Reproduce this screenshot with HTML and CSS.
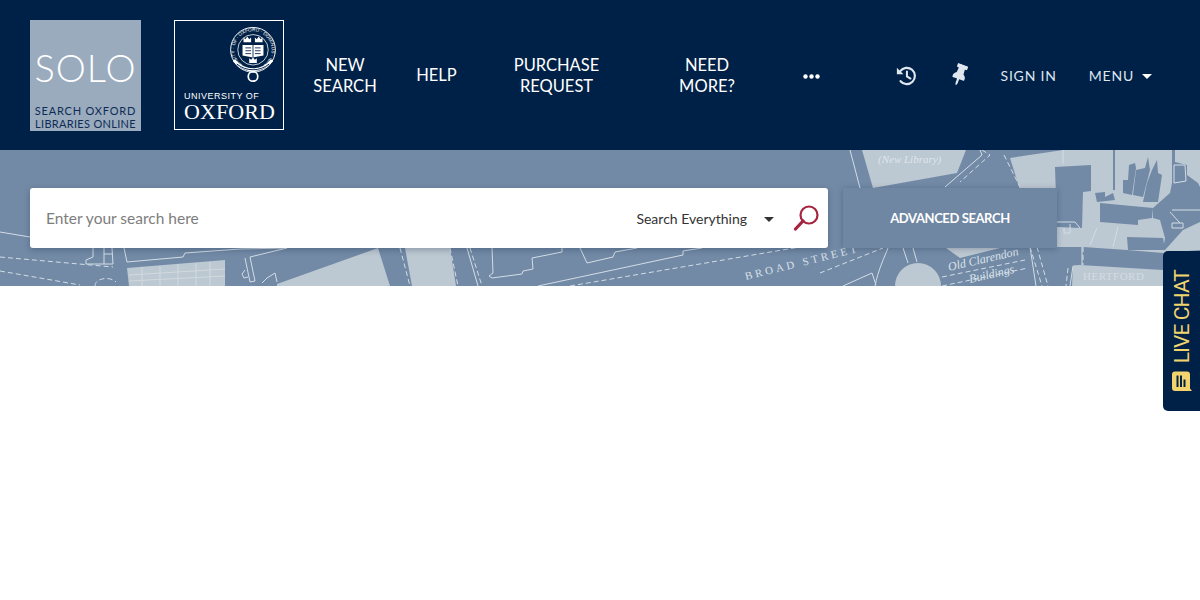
FILE: index.html
```html
<!DOCTYPE html>
<html lang="en">
<head>
  <meta charset="UTF-8" />
  <meta name="viewport" content="width=device-width, initial-scale=1.0" />
  <title>SOLO - Search Oxford Libraries Online</title>
  <link rel="stylesheet" href="styles.css">
</head>
<body>
  <header class="topbar">
    <a class="solo-logo" href="#">
      <span class="solo-name">SOLO</span>
      <span class="solo-sub"><span class="solo-sub-wide">SEARCH OXFORD</span><br>LIBRARIES ONLINE</span>
    </a>
    <a class="ox-logo" href="#">
      <svg class="ox-seal" viewBox="0 0 50 62">
        <defs><path id="sealRing" d="M25 44.500a19.500 19.500 0 1 1 .01 0"/></defs>
        <circle cx="25" cy="25" r="23.500" fill="none" stroke="#fff" stroke-width="1"/>
        <circle cx="25" cy="25" r="16" fill="none" stroke="#fff" stroke-width=".8"/>
        <text class="seal-text"><textPath href="#sealRing">UNIVERSITY · OF · OXFORD · DOMINUS · ILLU</textPath></text>
        <path d="M14 20h22v11l-11 2-11-2z" fill="#fff"/>
        <path d="M25 20v13M17 23h6M17 26h6M17 29h6M27 23h6M27 26h6M27 29h6" stroke="#002147" stroke-width=".9"/>
        <path d="M15 12l2 2 2-3 2 3 2-2v5h-8zM27 12l2 2 2-3 2 3 2-2v5h-8zM21 34l2 1.500 2-2.500 2 2.500 2-1.500v5h-8z" fill="#fff"/>
        <path d="M5 36c5 6 13 10 20 10s15-4 20-10" fill="none" stroke="#fff" stroke-width="3"/>
        <path d="M8 40c5 4 11 6 17 6s12-2 17-6" fill="none" stroke="#002147" stroke-width="1"/>
        <circle cx="25" cy="53" r="5" fill="none" stroke="#fff" stroke-width="1.800"/>
      </svg>
      <span class="ox-small">UNIVERSITY OF</span>
      <span class="ox-big">OXFORD</span>
    </a>
    <nav class="main-nav">
      <a href="#">NEW<br>SEARCH</a>
      <a href="#">HELP</a>
      <a href="#">PURCHASE<br>REQUEST</a>
      <a href="#">NEED<br>MORE?</a>
      <a class="nav-dots" href="#" aria-label="More">
        <svg viewBox="0 0 17 5" width="17" height="5"><circle cx="2.500" cy="2.500" r="2.200"/><circle cx="8.500" cy="2.500" r="2.200"/><circle cx="14.500" cy="2.500" r="2.200"/></svg>
      </a>
    </nav>
    <div class="user-nav">
      <a class="icon-history" href="#" aria-label="History">
        <svg viewBox="0 0 24 24" width="21" height="21"><path d="M4.800 7A9.300 9.300 0 1 1 5.200 18.500" fill="none" stroke="#dfe6ee" stroke-width="2.500" stroke-linecap="round"/><path d="M1 3V10.500H8.500Z" fill="#dfe6ee"/><path d="M12.500 7.500V13L16.500 15.500" fill="none" stroke="#dfe6ee" stroke-width="2.300" stroke-linecap="round"/></svg>
      </a>
      <a class="icon-pin" href="#" aria-label="Pinned">
        <svg viewBox="0 0 384 512" width="13" height="22" preserveAspectRatio="none"><path d="M298.028 214.267L285.793 96H328c13.255 0 24-10.745 24-24V24c0-13.255-10.745-24-24-24H56C42.745 0 32 10.745 32 24v48c0 13.255 10.745 24 24 24h42.207L85.972 214.267C37.465 236.82 0 277.261 0 328c0 13.255 10.745 24 24 24h136v104.007c0 1.242.289 2.467.845 3.578l24 48c2.941 5.882 11.364 5.893 14.311 0l24-48a8.008 8.008 0 0 0 .845-3.578V352h136c13.255 0 24-10.745 24-24-.001-51.183-37.983-91.420-85.973-113.733z"/></svg>
      </a>
      <a class="user-link link-signin" href="#">SIGN IN</a>
      <a class="user-link" href="#">MENU<span class="caret caret-light"></span></a>
    </div>
  </header>

  <section class="hero">
    <svg class="hero-map" viewBox="0 0 1200 136" width="1200" height="136">
      <g class="map-fill">
        <path d="M127 118 225 110V136H129Z"/>
        <path d="M277 134 378 98 390 136H277Z"/>
        <path d="M405 98H450L456 136H412Z"/>
        <path d="M862 0H966L957 23 873 38Z"/>
        <path d="M946 98H1000L960 108Z"/>
        <path d="M1010 8 1063 0H1200V100L1163 103 1127 100 1083 97 1057 97V60L1020 40Z"/>
        <path d="M1073 116Q1073 115 1080 115L1163 120V136H1072Z"/>
        <circle cx="918" cy="136" r="23"/>
      </g>
      <g class="map-dark">
        <path d="M1055 17 1091 15V41L1083 42 1082 78 1057 77Z"/>
        <path d="M1113 0H1115V40H1113Z"/>
        <path d="M1100 53 1153 58 1152 68 1138 70V75L1100 72Z"/>
        <path d="M1095 43 1105 42V47L1113 43 1115 50 1097 52Z"/>
        <path d="M1123 43V30H1128L1129 15 1135 13 1136 18 1132 45Z"/>
        <path d="M1133 45 1136 20 1145 18 1148 7 1150 20 1143 47Z"/>
        <path d="M1143 52 1147 33 1152 20 1157 10 1158 23 1162 25 1158 52Z"/>
        <path d="M1172 0H1175V12L1187 15V25L1198 33 1200 37V72L1183 80 1165 100H1163L1165 88 1160 70 1153 68V58L1170 43 1172 33Z"/>
        <path d="M1127 87 1163 88 1165 100 1128 100Z"/>
      </g>
      <g class="map-line">
        <path d="M0 82 30 87"/>
        <path d="M93 98V107L86 110V114H113L112 98M104 98V114M104 104H112"/>
        <path d="M124 98 127 112 183 107 185 103 240 99 287 98"/>
        <path d="M245 108 250 132 255 131 250 107 287 98M245 120 242 124 244 128 248 127M262 133 267 128 275 123 277 132"/>
        <path d="M467 98 478 136"/>
        <path d="M492 98 493 123 489 126 492 128 522 124 523 121 533 119 532 108 562 102V98"/>
        <path d="M580 98 587 113 613 107 615 102 637 98"/>
        <path d="M538 136 683 105V101L702 98"/>
        <path d="M850 0 860 38M945 37 982 5 980 0"/>
        <path d="M875 136C878 120 885 106 888 98M903 98 908 113M913 98 917 112"/>
        <path d="M843 136 872 123 876 135"/>
        <path d="M1030 97 1036 136M1082 97V115M1073 116 1070 136"/>
        <path d="M1063 0V14M1097 78 1090 95M1118 77 1113 97M1174 15H1185L1186 31 1174 33ZM1172 60H1200M1170 62 1180 73M1172 73H1183V78H1172Z"/>
        <path d="M1057 72H1075L1080 78M1064 78 1064 83H1070V74"/>
      </g>
      <g class="map-faint">
        <path d="M142 117V136M160 116V136M178 114V136M196 113V136M210 112V136M129 125 225 119M129 131 225 126"/>
      </g>
      <g class="map-dash">
        <path d="M0 107 113 117M0 121 80 135"/>
        <path d="M400 98 410 136M450 98 458 136M470 98 482 136"/>
        <path d="M570 136 800 97M820 123 883 98"/>
        <path d="M95 136C95 128 110 126 116 132"/>
        <path d="M982 0 990 5 960 32M1004 5 1020 37"/>
        <path d="M942 127 1025 110M942 136 1028 118M1030 97 1042 136M1037 97 1048 136M1083 97V115"/>
        <path d="M1068 118 1066 136"/>
      </g>
      <text class="map-text map-street" transform="translate(746 130) rotate(-14)">BROAD STREET</text>
      <text class="map-text map-italic" transform="translate(949 121) rotate(-13)">Old Clarendon</text>
      <text class="map-text map-italic" transform="translate(970 133) rotate(-13)">Buildings</text>
      <text class="map-text map-hert" x="1083" y="130">HERTFORD</text>
      <text class="map-text map-lib" x="878" y="13">(New Library)</text>
    </svg>

    <div class="search-row">
      <form class="search-box">
        <input class="search-input" type="text" placeholder="Enter your search here" />
        <button class="scope-select" type="button">Search Everything<span class="caret caret-dark"></span></button>
        <button class="search-go" type="button" aria-label="Search">
          <svg viewBox="0 0 26 26" width="26" height="26"><circle cx="16" cy="10" r="8.500" fill="none" stroke="#a6243f" stroke-width="2.200"/><path d="M10 16 2.500 24" stroke="#a6243f" stroke-width="3.200" stroke-linecap="round"/></svg>
        </button>
      </form>
      <a class="advanced-btn" href="#">ADVANCED SEARCH</a>
    </div>
  </section>

  <a class="live-chat" href="#">
    <svg class="chat-icon" viewBox="0 0 20 20" width="20" height="21"><path d="M3 0H15Q18 0 18 3V17L20 19.500H3Q0 19.500 0 16.500V3Q0 0 3 0Z" fill="#f2d46e"/><path d="M4.500 4H6.500V15.500H4.500ZM8 4H10V15.500H8ZM11.500 8H13.500V15.500H11.500Z" fill="#002147"/></svg>
    <span class="chat-label">LIVE CHAT</span>
  </a>
</body>
</html>
```

FILE: styles.css
```css
body {
  margin: 0;
  background: #fff;
  font-family: 'Lato', 'Noto Sans', sans-serif;
  height: 600px;
  overflow: hidden;
  position: relative;
}

a {
  color: inherit;
  text-decoration: none;
}

.topbar {
  display: flex;
  align-items: center;
  height: 150px;
  padding: 0 48px 0 30px;
  background: #002147;
  color: #fff;
  box-sizing: border-box;
}

.solo-logo {
  display: flex;
  flex-direction: column;
  align-items: center;
  width: 111px;
  height: 111px;
  background: #9aabbe;
  box-sizing: border-box;
  padding-top: 25px;
}

.solo-name {
  font-family: 'Lato', sans-serif;
  font-weight: 300;
  font-size: 38px;
  line-height: 44px;
  letter-spacing: 1px;
  color: #fff;
}

.solo-sub {
  margin-top: 15px;
  font-family: 'Lato', sans-serif;
  font-size: 11px;
  line-height: 13px;
  letter-spacing: 0.3px;
  text-align: center;
  color: #0d2c55;
  white-space: nowrap;
}

.solo-sub-wide {
  letter-spacing: 0.8px;
}

.ox-logo {
  display: flex;
  flex-direction: column;
  align-items: flex-start;
  width: 110px;
  height: 110px;
  margin-left: 33px;
  padding-left: 9px;
  border: 1px solid #fff;
  box-sizing: border-box;
}

.ox-seal {
  width: 48px;
  height: 59px;
  margin: 5px 0 0 45px;
  flex: none;
}

.seal-text {
  font-family: 'Liberation Sans', sans-serif;
  font-size: 5px;
  fill: #fff;
}

.ox-small {
  margin-top: 6px;
  font-family: 'Liberation Sans', sans-serif;
  font-size: 9px;
  line-height: 11px;
  letter-spacing: 0.5px;
}

.ox-big {
  margin-top: -1px;
  font-family: 'Liberation Serif', serif;
  font-size: 22px;
  line-height: 22px;
  letter-spacing: 0.1px;
}

.main-nav {
  display: grid;
  grid-template-columns: 78px 105px 135px 166px 42px;
  align-items: center;
  margin-left: 22px;
  padding-top: 1px;
  font-size: 16.500px;
  line-height: 21px;
  text-align: center;
}

.nav-dots {
  line-height: 0;
  fill: #fff;
}

.user-nav {
  display: flex;
  align-items: center;
  margin-left: auto;
}

.icon-history {
  display: flex;
  margin-right: 36px;
}

.icon-pin {
  display: flex;
  fill: #dfe6ee;
  margin-right: 34px;
  transform: rotate(20deg);
}

.user-link {
  font-size: 14px;
  letter-spacing: 0.8px;
  color: #dfe6ee;
}

.link-signin {
  margin-right: 32px;
}

.caret {
  display: inline-block;
  width: 0;
  height: 0;
  border-left: 5px solid transparent;
  border-right: 5px solid transparent;
  vertical-align: middle;
}

.caret-light {
  margin-left: 8px;
  border-top: 5px solid #fff;
}

.caret-dark {
  margin-left: 17px;
  border-top: 5px solid #333;
}

.hero {
  position: relative;
  height: 136px;
  background: #728aa6;
  overflow: hidden;
}

.hero-map {
  position: absolute;
  left: 0;
  top: 0;
}

.map-fill {
  fill: #bcc8d2;
}

.map-dark {
  fill: #728aa6;
}

.map-line,
.map-dash {
  fill: none;
  stroke: #d3dde6;
  stroke-width: 1;
}

.map-faint {
  fill: none;
  stroke: #d2dade;
  stroke-width: 1;
}

.map-dash {
  stroke-dasharray: 5 3;
}

.map-text {
  font-family: 'Liberation Serif', serif;
  fill: #dbe3ea;
}

.map-street {
  font-size: 11px;
  letter-spacing: 3px;
}

.map-italic {
  font-size: 12px;
  font-style: italic;
}

.map-hert {
  font-size: 11px;
  letter-spacing: 0.5px;
  fill: #d3dce3;
}

.map-lib {
  font-size: 11px;
  font-style: italic;
  fill: #dfe6ec;
}

.search-row {
  position: relative;
  display: flex;
  gap: 15px;
  padding: 38px 0 0 30px;
}

.search-box {
  display: flex;
  align-items: center;
  width: 798px;
  height: 60px;
  background: #fff;
  border-radius: 3px;
  box-shadow: 0 2px 6px rgba(0, 20, 50, 0.25);
}

.search-input {
  flex: 1;
  min-width: 0;
  height: 100%;
  padding: 0 0 0 16px;
  border: none;
  outline: none;
  background: none;
  font: 15.500px 'Lato', sans-serif;
  color: #333;
}

.search-input::placeholder {
  color: #7d7d7d;
  opacity: 1;
}

.scope-select {
  padding: 0;
  border: none;
  background: none;
  font: 14px 'Lato', sans-serif;
  color: #333;
  white-space: nowrap;
}

.search-go {
  display: flex;
  margin: 0 9px 0 19px;
  padding: 0;
  border: none;
  background: none;
}

.advanced-btn {
  display: flex;
  align-items: center;
  justify-content: center;
  width: 214px;
  height: 60px;
  background: #6f87a3;
  box-shadow: 0 1px 6px rgba(0, 20, 50, 0.25);
  color: #fff;
  font-size: 13px;
  font-weight: 700;
  letter-spacing: -0.4px;
}

.live-chat {
  position: absolute;
  top: 251px;
  right: 0;
  display: flex;
  flex-direction: column-reverse;
  align-items: center;
  gap: 8px;
  width: 37px;
  height: 160px;
  padding: 19px 0 19px;
  box-sizing: border-box;
  background: #002147;
  border-radius: 5px 0 0 5px;
}

.chat-icon {
  flex: none;
}

.chat-label {
  writing-mode: vertical-rl;
  transform: rotate(180deg);
  font-family: 'Roboto', sans-serif;
  font-size: 21px;
  line-height: 24px;
  letter-spacing: -0.9px;
  color: #f2d46e;
  white-space: nowrap;
}
```
